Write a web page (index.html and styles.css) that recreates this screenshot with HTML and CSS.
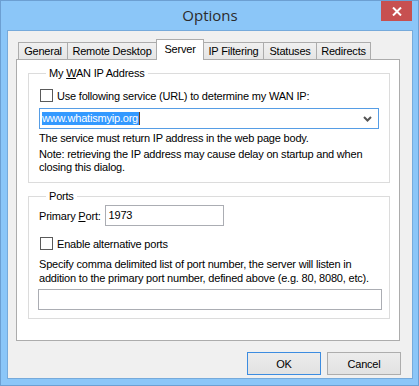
FILE: index.html
```html
<!DOCTYPE html>
<html lang="en">
<head>
  <meta charset="UTF-8">
  <title>Options</title>
  <link rel="stylesheet" href="styles.css">
</head>
<body>
  <div class="window">
    <div class="titlebar">
      <span></span>
      <span class="title">Options</span>
      <button class="close" title="Close">
        <svg width="10" height="9" viewBox="0 0 10 9"><path d="M1 0.5 L9 8.5 M9 0.5 L1 8.5" stroke="#fff" stroke-width="2"/></svg>
      </button>
    </div>

    <div class="client">
      <div class="tabs">
        <div class="tab">General</div>
        <div class="tab">Remote Desktop</div>
        <div class="tab active">Server</div>
        <div class="tab">IP Filtering</div>
        <div class="tab">Statuses</div>
        <div class="tab">Redirects</div>
      </div>

      <div class="panel">
        <fieldset class="group wan">
          <legend>My <u>W</u>AN IP Address</legend>
          <label class="check"><span class="box"></span>Use following service (URL) to determine my WAN IP:</label>
          <div class="combo">
            <span class="selected">www.whatismyip.org</span><span class="caret"></span>
            <svg class="arrow" width="9" height="6" viewBox="0 0 9 6"><path d="M1 1 L4.5 4.5 L8 1" fill="none" stroke="#555" stroke-width="2"/></svg>
          </div>
          <p class="line first">The service must return IP address in the web page body.</p>
          <p class="line">Note: retrieving the IP address may cause delay on startup and when<br>closing this dialog.</p>
        </fieldset>

        <fieldset class="group ports">
          <legend>Ports</legend>
          <div class="port-row">
            <span>Primary <u>P</u>ort:</span>
            <div class="field port">1973</div>
          </div>
          <label class="check alt"><span class="box"></span>Enable alternative ports</label>
          <p class="line">Specify comma delimited list of port number, the server will listen in<br>addition to the primary port number, defined above (e.g. 80, 8080, etc).</p>
          <div class="field wide"></div>
        </fieldset>
      </div>

      <div class="buttons">
        <button class="btn default">OK</button>
        <button class="btn">Cancel</button>
      </div>
    </div>
  </div>
</body>
</html>
```

FILE: styles.css
```css
/* Dialog window */
body {
  margin: 0;
  font-family: "Liberation Sans", Arial, sans-serif;
  font-size: 11px;
  letter-spacing: -0.2px;
  color: #000;
}

.window {
  width: 419px;
  height: 386px;
  box-sizing: border-box;
  border: 1px solid #6c9fd2;
  background: #8bc6f8;
  padding: 0 5px 6px 6px;
  display: flex;
  flex-direction: column;
}

.titlebar {
  height: 29px;
  display: grid;
  grid-template-columns: 1fr auto 1fr;
  align-items: center;
}

.title {
  font-family: "Open Sans", "Noto Sans", sans-serif;
  font-size: 15px;
  letter-spacing: 0;
  color: #2b2b2b;
  margin-top: -1px;
}

.close {
  justify-self: end;
  align-self: start;
  width: 31px;
  height: 20px;
  margin-right: 1px;
  border: none;
  padding: 0;
  background: #c75050;
  display: flex;
  align-items: center;
  justify-content: center;
}

.client {
  flex: 1;
  background: #f0f0f0;
  border: 1px solid #76aadb;
  padding: 8px 12px 0 8px;
}

/* Tabs */
.tabs {
  display: flex;
  align-items: flex-end;
  height: 20px;
  padding-left: 2px;
}

.tab {
  box-sizing: border-box;
  height: 17px;
  line-height: 16px;
  text-align: center;
  border: 1px solid #acacac;
  border-bottom: none;
  margin-right: -1px;
  background: linear-gradient(#f0f0f0, #e5e5e5);
}

.tab:nth-child(1) { width: 50px; }
.tab:nth-child(2) { width: 90px; }
.tab:nth-child(3) { width: 48px; }
.tab:nth-child(4) { width: 61px; }
.tab:nth-child(5) { width: 54px; }
.tab:nth-child(6) { width: 55px; }

.tab.active {
  position: relative;
  z-index: 1;
  height: 21px;
  padding: 1px 0 3px;
  margin-bottom: -1px;
  background: #fff;
}

.panel {
  height: 273px;
  background: #fff;
  border: 1px solid #acacac;
  padding: 7px 9px 0 11px;
}

/* Group boxes */
.group {
  margin: 0;
  border: 1px solid #dcdcdc;
  padding: 0 10px 8px 10px;
}

.group legend {
  padding: 0 3px;
  margin-left: 7px;
  line-height: 13px;
}

.ports {
  margin-top: 7px;
  padding-right: 7px;
}

.check {
  display: flex;
  align-items: center;
  height: 13px;
  margin-top: 9px;
}

.box {
  width: 11px;
  height: 11px;
  border: 1px solid #5a5a5a;
  background: #fff;
  margin: 0 4px 0 1px;
}

.combo {
  height: 19px;
  border: 1px solid #569de5;
  margin-top: 6px;
  display: flex;
  align-items: center;
  padding-left: 2px;
}

.selected {
  background: #3399ff;
  color: #fff;
  line-height: 13px;
  padding-right: 1px;
}

.caret {
  width: 1px;
  height: 13px;
  background: #6b3a1a;
}

.arrow {
  margin-left: auto;
  margin-right: 6px;
}

.line {
  margin: 3px 0 0;
  line-height: 13px;
  white-space: nowrap;
}

.port-row {
  display: flex;
  align-items: center;
  margin-top: 2px;
}

.field {
  height: 19px;
  border: 1px solid #abadb3;
  background: #fff;
}

.port {
  width: 114px;
  margin-left: 4px;
  line-height: 19px;
  padding-left: 3px;
}

.alt {
  margin-top: 11px;
}

.ports .line {
  margin-top: 7px;
  line-height: 14px;
}

.wide {
  margin: 4px 0 0 -1px;
}

/* Buttons */
.buttons {
  display: flex;
  justify-content: flex-end;
  gap: 6px;
  margin: 11px -1px 0 0;
}

.btn {
  width: 74px;
  height: 23px;
  font-family: inherit;
  font-size: 11px;
  letter-spacing: inherit;
  color: #000;
  background: linear-gradient(#ececec, #e2e2e2);
  border: 1px solid #adadad;
  padding: 0;
}

.btn.default {
  border-color: #3c8ce0;
}
```
